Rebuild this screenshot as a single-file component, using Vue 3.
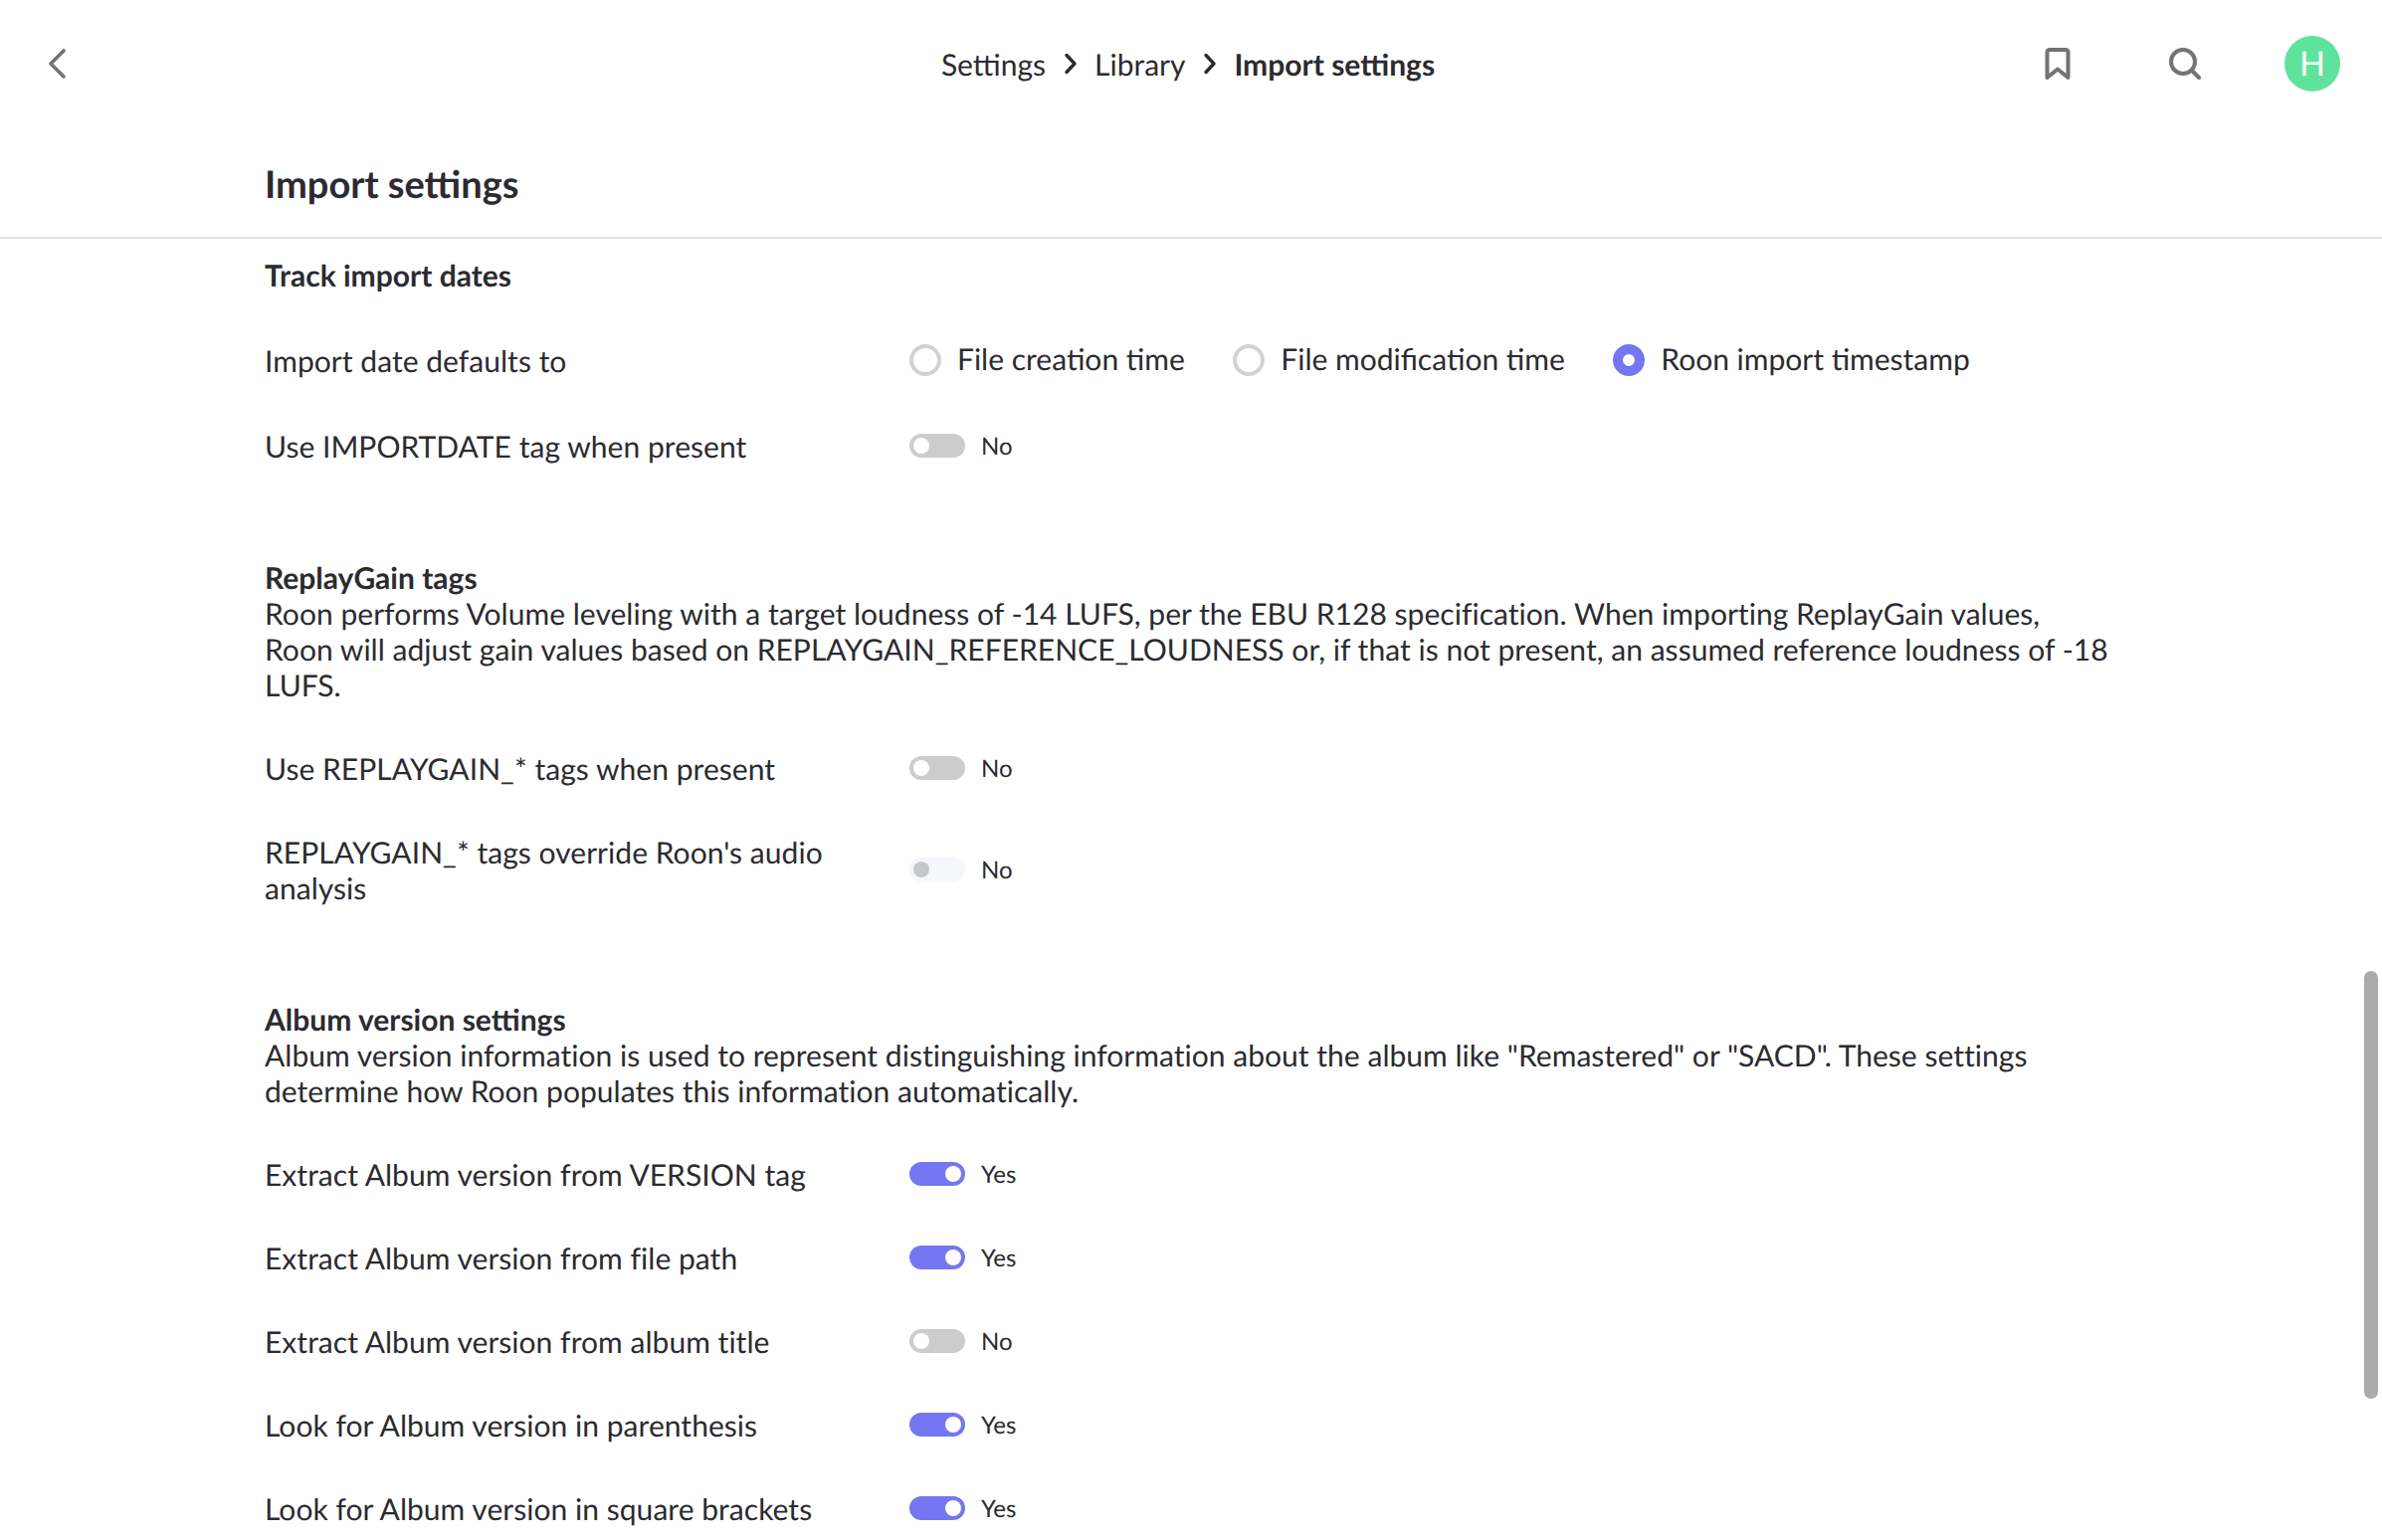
<script setup>
const radios = [
  { label: 'File creation time', on: false },
  { label: 'File modification time', on: false },
  { label: 'Roon import timestamp', on: true },
]
const sections = [
  {
    title: 'ReplayGain tags',
    desc: "Roon performs Volume leveling with a target loudness of -14 LUFS, per the EBU R128 specification. When importing ReplayGain values, Roon will adjust gain values based on REPLAYGAIN_REFERENCE_LOUDNESS or, if that is not present, an assumed reference loudness of -18 LUFS.",
    rows: [
      { label: 'Use REPLAYGAIN_* tags when present', on: false },
      { label: "REPLAYGAIN_* tags override Roon's audio analysis", on: false, disabled: true },
    ],
  },
  {
    title: 'Album version settings',
    desc: 'Album version information is used to represent distinguishing information about the album like "Remastered" or "SACD". These settings determine how Roon populates this information automatically.',
    rows: [
      { label: 'Extract Album version from VERSION tag', on: true },
      { label: 'Extract Album version from file path', on: true },
      { label: 'Extract Album version from album title', on: false },
      { label: 'Look for Album version in parenthesis', on: true },
      { label: 'Look for Album version in square brackets', on: true },
    ],
  },
]
</script>

<template>
  <div class="page">
    <header class="topbar">
      <button class="back" aria-label="Back">
        <svg width="18" height="30" viewBox="0 0 18 30" fill="none"><path d="M16 2 3 15l13 13" stroke="#737373" stroke-width="3.6" stroke-linecap="round" stroke-linejoin="round"/></svg>
      </button>
      <nav class="crumbs">
        <span>Settings</span>
        <svg class="sep" width="14" height="22" viewBox="0 0 14 22" fill="none"><path d="M3 2.500 11 11l-8 8.500" stroke="#2b2b30" stroke-width="3.400" stroke-linecap="round" stroke-linejoin="round"/></svg>
        <span>Library</span>
        <svg class="sep" width="14" height="22" viewBox="0 0 14 22" fill="none"><path d="M3 2.500 11 11l-8 8.500" stroke="#2b2b30" stroke-width="3.400" stroke-linecap="round" stroke-linejoin="round"/></svg>
        <span class="current">Import settings</span>
      </nav>
      <div class="actions">
        <svg width="26" height="32" viewBox="0 0 26 32" fill="none"><path d="M2.500 30V4.500A2.500 2.500 0 0 1 5 2h16a2.500 2.500 0 0 1 2.500 2.500V30L13 21.500z" stroke="#737373" stroke-width="4" stroke-linejoin="round"/></svg>
        <svg width="32" height="32" viewBox="0 0 32 32" fill="none"><circle cx="14" cy="14" r="12" stroke="#737373" stroke-width="4"/><path d="m23 23 7 7" stroke="#737373" stroke-width="4" stroke-linecap="round"/></svg>
        <div class="avatar">H</div>
      </div>
    </header>

    <div class="titlebar"><h1>Import settings</h1></div>

    <main class="content">
      <section>
        <h2>Track import dates</h2>
        <div class="row radio-row">
          <div class="label">Import date defaults to</div>
          <div class="radios">
            <div v-for="r in radios" :key="r.label" class="radio-item">
              <span class="radio" :class="{ on: r.on }"></span>
              <span class="radio-text">{{ r.label }}</span>
            </div>
          </div>
        </div>
        <div class="row">
          <div class="label">Use IMPORTDATE tag when present</div>
          <div class="control">
            <span class="toggle"><span class="knob"></span></span>
            <span class="state">No</span>
          </div>
        </div>
      </section>

      <section v-for="s in sections" :key="s.title">
        <h2>{{ s.title }}</h2>
        <p>{{ s.desc }}</p>
        <div v-for="row in s.rows" :key="row.label" class="row">
          <div class="label">{{ row.label }}</div>
          <div class="control">
            <span class="toggle" :class="{ on: row.on, disabled: row.disabled }"><span class="knob"></span></span>
            <span class="state">{{ row.on ? 'Yes' : 'No' }}</span>
          </div>
        </div>
      </section>
    </main>

    <div class="scrollbar"></div>
  </div>
</template>

<style scoped>
.page {
  position: relative;
  width: 2394px;
  height: 1548px;
  overflow: hidden;
  background: #fff;
  color: #2b2b30;
  font-family: Lato, "Open Sans", sans-serif;
  font-size: 30px;
  line-height: 36px;
  font-variant-ligatures: common-ligatures;
  text-rendering: geometricPrecision;
}
.topbar {
  position: relative;
  height: 128px;
  display: flex;
  align-items: center;
  justify-content: center;
}
.back {
  position: absolute;
  left: 48px;
  top: 49px;
  padding: 0;
  border: 0;
  background: none;
  line-height: 0;
}
.crumbs {
  display: flex;
  align-items: center;
  gap: 17.5px;
  margin-left: -6px;
  padding-top: 2px;
}
.crumbs .current { font-weight: 700; }
.sep { flex: none; margin-top: -2px; }
.actions {
  position: absolute;
  right: 42px;
  top: 36px;
  display: flex;
  align-items: center;
  gap: 84px;
}
.actions svg:first-child { margin-right: 15px; }
.avatar {
  width: 56px;
  height: 56px;
  border-radius: 50%;
  background: #5fe39c;
  color: #fff;
  display: flex;
  align-items: center;
  justify-content: center;
  font-size: 34px;
}
.titlebar {
  height: 112px;
  border-bottom: 2px solid #e3e3e3;
  padding-left: 266px;
  box-sizing: border-box;
}
h1 {
  margin: 0;
  padding-top: 35px;
  font-size: 38px;
  line-height: 44px;
  font-weight: 700;
}
.content {
  padding: 19px 0 0 266px;
  width: 1856px;
}
section + section { margin-top: 72px; }
h2 {
  margin: 0;
  font-size: 30px;
  line-height: 36px;
  font-weight: 700;
}
section:first-child h2 { margin-bottom: 24px; }
p {
  margin: 0 0 24px;
  font-size: 30px;
  line-height: 36px;
  letter-spacing: 0.03px;
}
.row {
  display: grid;
  grid-template-columns: 648px 1fr;
  align-items: center;
  padding: 24px 0;
}
.label { max-width: 600px; letter-spacing: 0.04px; }
.radios {
  display: flex;
  align-items: center;
  gap: 48.5px;
}
.radio-item {
  display: flex;
  align-items: center;
  gap: 16px;
  height: 40px;
}
.radio-text { margin-top: -4px; }
.radio {
  width: 32px;
  height: 32px;
  box-sizing: border-box;
  border: 4px solid #d2d2d2;
  border-radius: 50%;
  background: #fff;
  margin-top: -2px;
}
.radio.on {
  border: 10px solid #7477f1;
}
.control {
  display: flex;
  align-items: center;
  gap: 16px;
  margin-top: -1px;
}
.toggle {
  width: 56px;
  height: 24px;
  padding: 4px;
  box-sizing: border-box;
  border-radius: 12px;
  background: #cccccc;
  display: flex;
  margin-top: -1px;
}
.knob {
  width: 16px;
  height: 16px;
  border-radius: 50%;
  background: #fff;
}
.toggle.on {
  background: #7477f1;
  justify-content: flex-end;
}
.toggle.disabled { background: #f6f7fb; }
.toggle.disabled .knob { background: #c5c7cd; }
.state { font-size: 24px; line-height: 30px; }
.scrollbar {
  position: absolute;
  left: 2376px;
  top: 976px;
  width: 14px;
  height: 430px;
  border-radius: 7px;
  background: #aaaaaa;
}
</style>
